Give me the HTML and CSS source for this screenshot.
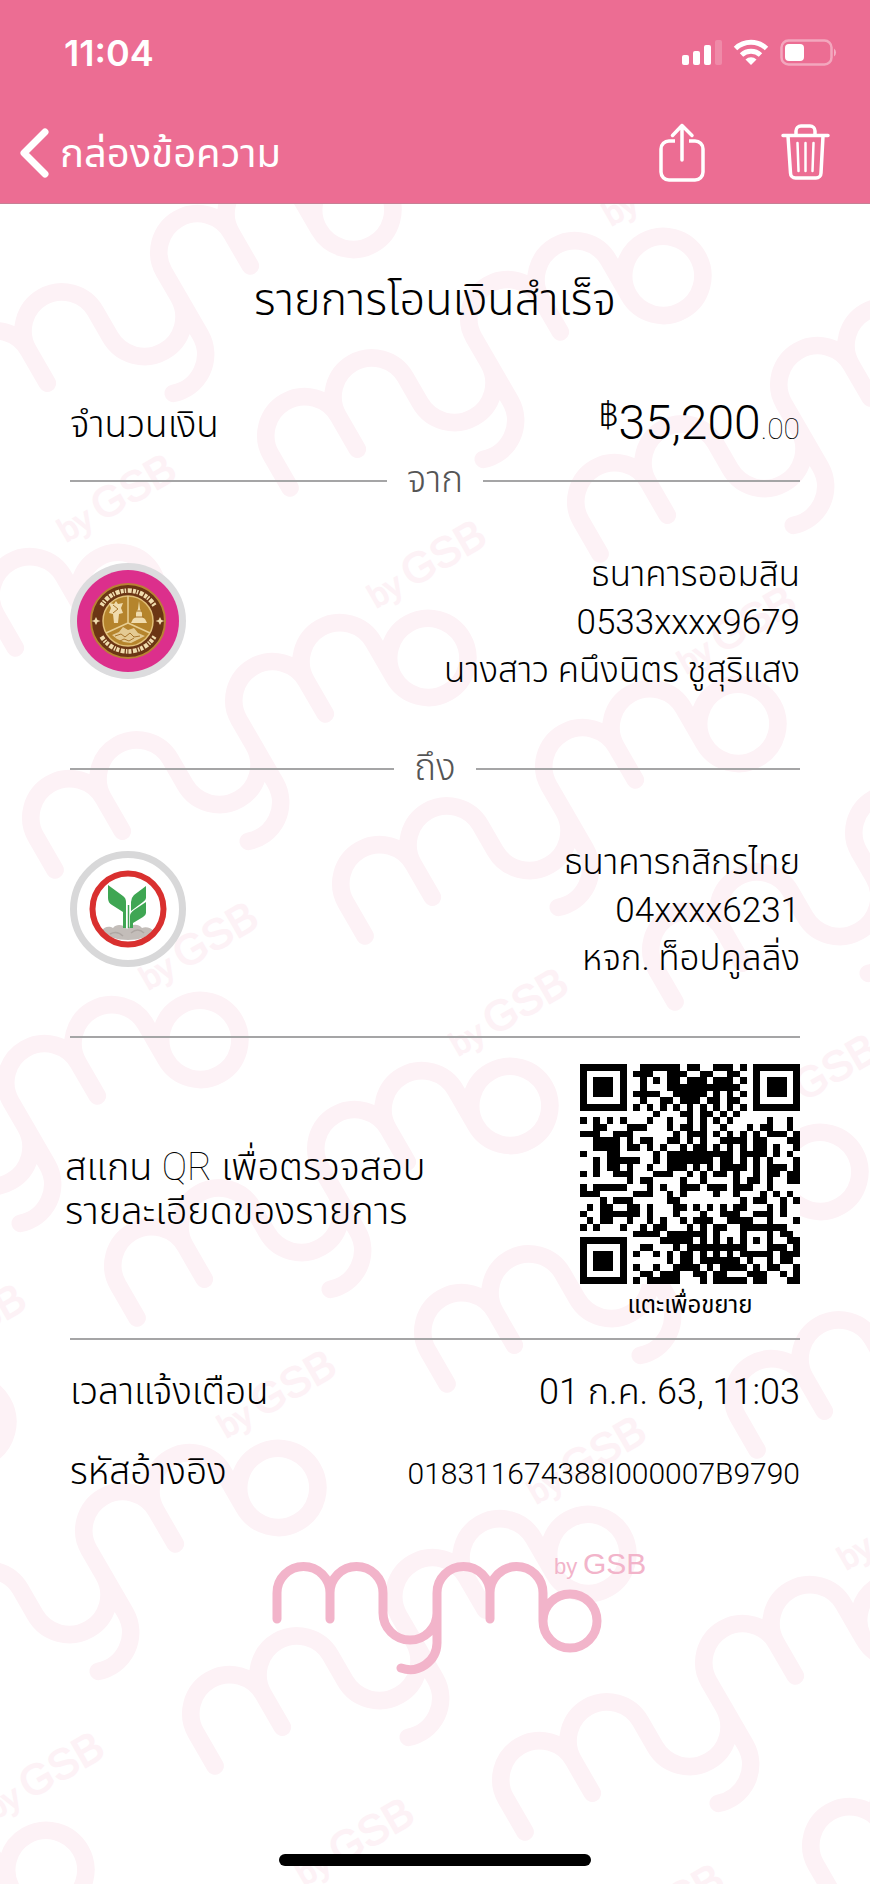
FILE: index.html
```html
<!DOCTYPE html>
<html lang="th">
<head>
<meta charset="utf-8">
<meta name="viewport" content="width=device-width, initial-scale=1">
<title>รายการโอนเงินสำเร็จ</title>
<link rel="stylesheet" href="styles.css">
</head>
<body>
<svg class="defs" width="0" height="0" aria-hidden="true">
  <defs>
    <path id="mymo" d="M0 53V27a26.5 26.5 0 0 1 53 0V53M53 27a26.5 26.5 0 0 1 53 0V47a27 27 0 0 0 54 0V27a26.5 26.5 0 0 1 53 0V53M213 27a26.5 26.5 0 0 1 53 0V55M160 47V77a27 27 0 0 1-36 25M320 55a27 27 0 1 1-54 0a27 27 0 1 1 54 0"/>
    <g id="mark">
      <g transform="rotate(-30) scale(1.465) translate(2 -55)">
        <use href="#mymo" class="mark-line"/>
        <text class="mark-text" x="279" y="8" font-size="22">by</text>
        <text class="mark-text" x="307" y="8" font-size="29">GSB</text>
      </g>
    </g>
  </defs>
</svg>

<header class="header">
  <div class="status">
    <span class="clock">11:04</span>
    <svg class="status-icons" viewBox="0 0 156 28" width="156" height="28" aria-hidden="true">
      <g fill="#fff">
        <rect x="0" y="16" width="7" height="10" rx="2"/>
        <rect x="11" y="12" width="7" height="14" rx="2"/>
        <rect x="22" y="6" width="7" height="20" rx="2"/>
        <rect x="33" y="1" width="7" height="25" rx="2" opacity=".2"/>
        <path d="M69 26l-5.500-5.500a8 8 0 0 1 11 0z"/>
        <rect x="103" y="5" width="19" height="17" rx="4"/>
        <path d="M152 9.500a5 5 0 0 1 0 8z" opacity=".45"/>
      </g>
      <g fill="none" stroke="#fff" stroke-width="5">
        <path d="M53.500 9.500a22.500 22.500 0 0 1 31 0"/>
        <path d="M59.500 16a14 14 0 0 1 19 0"/>
      </g>
      <rect x="99.500" y="1.500" width="50" height="24" rx="7" fill="none" stroke="#fff" stroke-width="2.500" opacity=".4"/>
    </svg>
  </div>
  <nav class="nav">
    <a class="back" href="#inbox">
      <svg viewBox="0 0 30 50" width="30" height="50" aria-hidden="true"><path d="M25 4L4 25L25 46" fill="none" stroke="#fff" stroke-width="7" stroke-linecap="round" stroke-linejoin="round"/></svg>
      <span>กล่องข้อความ</span>
    </a>
    <div class="actions">
      <button class="icon-button" type="button" aria-label="แชร์">
        <svg viewBox="0 0 48 60" width="48" height="60" fill="none" stroke="#fff" stroke-width="3.500"><path d="M17 18H11a8 8 0 0 0-8 8V49a8 8 0 0 0 8 8H37a8 8 0 0 0 8-8V26a8 8 0 0 0-8-8H31"/><path d="M24 37V2.500M14.500 12.500L24 2.500L34 12.500" stroke-linecap="round" stroke-linejoin="round"/></svg>
      </button>
      <button class="icon-button" type="button" aria-label="ลบ">
        <svg viewBox="0 0 50 60" width="50" height="60" fill="none" stroke="#fff" stroke-width="3.500" stroke-linecap="round" stroke-linejoin="round"><path d="M3 12.500H48M8 13L10.500 50a5 5 0 0 0 5 5H36a5 5 0 0 0 5-5L43 13M16 12V8a5 5 0 0 1 5-5H30a5 5 0 0 1 5 5V12"/><path d="M17.500 20L18.500 48M25.500 20V48M33.500 20L32.500 48" stroke-width="2.500"/></svg>
      </button>
    </div>
  </nav>
</header>

<main class="slip">
  <svg class="watermark" viewBox="0 204 870 1680" preserveAspectRatio="xMidYMin slice" aria-hidden="true">
    <use href="#mark" x="-100" y="-22"/><use href="#mark" x="210" y="44"/><use href="#mark" x="520" y="110"/><use href="#mark" x="830" y="176"/>
    <use href="#mark" x="-331" y="360"/><use href="#mark" x="-21" y="426"/><use href="#mark" x="289" y="492"/><use href="#mark" x="599" y="558"/><use href="#mark" x="909" y="624"/>
    <use href="#mark" x="-256" y="808"/><use href="#mark" x="54" y="874"/><use href="#mark" x="364" y="940"/><use href="#mark" x="674" y="1006"/>
    <use href="#mark" x="-174" y="1256"/><use href="#mark" x="136" y="1322"/><use href="#mark" x="446" y="1388"/><use href="#mark" x="756" y="1454"/>
    <use href="#mark" x="-406" y="1638"/><use href="#mark" x="-96" y="1704"/><use href="#mark" x="214" y="1770"/><use href="#mark" x="524" y="1836"/><use href="#mark" x="834" y="1902"/>
    <use href="#mark" x="-328" y="2086"/><use href="#mark" x="-18" y="2152"/><use href="#mark" x="292" y="2218"/>
  </svg>

  <h1 class="title">รายการโอนเงินสำเร็จ</h1>

  <div class="row amount">
    <span>จำนวนเงิน</span>
    <span class="value"><span class="baht">฿</span><span class="whole">35,200</span><span class="cents">.00</span></span>
  </div>

  <div class="divider"><span>จาก</span></div>

  <section class="party">
    <svg viewBox="0 0 116 116" width="116" height="116" role="img" aria-label="ธนาคารออมสิน">
      <circle cx="58" cy="58" r="58" fill="#dcdcde"/>
      <circle cx="58" cy="58" r="51" fill="#dc2f8c"/>
      <circle cx="58" cy="58" r="37" fill="#6b3514" stroke="#b98234" stroke-width="2"/>
      <circle cx="58" cy="58" r="25" fill="#b5842c" stroke="#e2c078" stroke-width="1.500"/>
      <g fill="none" stroke="#f0dcae" stroke-width="4.500">
        <path d="M31.500 42.500a31 31 0 0 1 53 0" stroke-dasharray="3 1 1.500 1.500 4 1.200"/>
        <path d="M31.500 73.500a31 31 0 0 0 53 0" stroke-dasharray="4 1.200 1.500 1 3 1.500"/>
      </g>
      <path d="M58 33V60L36 70M58 60L80 70" fill="none" stroke="#e8ce92" stroke-width="1.500"/>
      <g fill="#f0dcae">
        <path d="M69 38l1 8 2 4v4l3 2 2 4H61l2-4 3-2v-4l2-4z"/>
        <path d="M46 38l2 3 5-1-2 5 2 5-4 1-1 9h-4l-1-9-4-1 2-5-2-5 5 1z"/>
        <path d="M42 72l7-3 4-5 5 3 6-2 4 5 7 3-8 4-6 3-7-1-7-3z" opacity=".8"/>
        <path d="M26 54l1.500 3 3 1-3 1-1.500 3-1.500-3-3-1 3-1zM90 54l1.500 3 3 1-3 1-1.500 3-1.500-3-3-1 3-1z"/>
      </g>
      <path d="M45 73l6-2 4 3 5-4 4 4 6-1M50 78l4-2 5 2 5-3M43 42l5 4-5 4M67 48h5M65 54h9" fill="none" stroke="#a8742a" stroke-width="1"/>
    </svg>
    <div class="details">
      <p>ธนาคารออมสิน</p>
      <p class="number">0533xxxx9679</p>
      <p>นางสาว คนึงนิตร ชูสุริแสง</p>
    </div>
  </section>

  <div class="divider second"><span>ถึง</span></div>

  <section class="party">
    <svg viewBox="0 0 116 116" width="116" height="116" role="img" aria-label="ธนาคารกสิกรไทย">
      <circle cx="58" cy="58" r="54.500" fill="#fff" stroke="#d8d8d9" stroke-width="7"/>
      <path d="M32 80c2-5 8-5 11-3 4-5 11-3 14 1 4-5 11-6 15-1 4-2 9 0 12 3-6 6-15 9-26 9s-20-3-26-9z" fill="#c3bdb9"/>
      <path d="M40 83q7-4 13 2M61 82q7-6 13 0" fill="none" stroke="#aea7a3" stroke-width="1.500"/>
      <circle cx="58" cy="58" r="35.500" fill="none" stroke="#d9302f" stroke-width="6"/>
      <path d="M38 34L53 45q3 2 3 6V77H53V61L42 54q-4-2-4-7z" fill="#3fa653"/>
      <path d="M76 35V47q0 2-3 4L61 60V51q0-4 3-7zM76 51V62q0 2-3 4L63 72V77H60V65q0-3 4-6z" fill="#3fa653"/>
      <path d="M58.500 54V77" stroke="#3fa653" stroke-width="1.500"/>
    </svg>
    <div class="details">
      <p>ธนาคารกสิกรไทย</p>
      <p class="number">04xxxx6231</p>
      <p>หจก. ท็อปคูลลิ่ง</p>
    </div>
  </section>

  <section class="scan">
    <p class="scan-text">สแกน <span class="thin">QR</span> เพื่อตรวจสอบ<br>รายละเอียดของรายการ</p>
    <button class="qr-button" type="button">
      <svg class="qr" viewBox="0 0 33 33" aria-hidden="true"><rect width="33" height="33" fill="#fff"/><path id="qr-modules" fill="#000" shape-rendering="crispEdges"/></svg>
      <span>แตะเพื่อขยาย</span>
    </button>
  </section>

  <div class="meta">
    <div class="row"><span>เวลาแจ้งเตือน</span><span class="date">01 ก.ค. 63, 11:03</span></div>
    <div class="row"><span>รหัสอ้างอิง</span><span class="reference">018311674388I000007B9790</span></div>
  </div>

  <svg class="logo" viewBox="-5 -24 390 133" width="390" height="133" role="img" aria-label="mymo by GSB">
    <use href="#mymo" class="logo-line"/>
    <text class="logo-text" x="277" y="8" font-size="22">by</text>
    <text class="logo-text" x="306" y="8" font-size="30">GSB</text>
  </svg>

  <div class="home-bar"></div>
</main>
<script src="qr.js"></script>
</body>
</html>
```

FILE: styles.css
```css
* {
  box-sizing: border-box;
}

body {
  margin: 0;
  min-height: 100vh;
  display: flex;
  flex-direction: column;
  background: #fff;
  color: #000;
  font-family: Roboto, "Liberation Sans", "Noto Sans Thai", "Loma", sans-serif;
  font-size: 37px;
  font-weight: 350;
}

h1,
p {
  margin: 0;
  font-weight: inherit;
}

.defs {
  position: absolute;
}

.header {
  background: #ec6d93;
  border-bottom: 1px solid #c77f95;
  color: #fff;
  height: 204px;
}

.status {
  display: flex;
  justify-content: space-between;
  align-items: center;
  height: 106px;
  padding: 0 32px 0 64px;
}

.clock {
  font-family: Inter, "Liberation Sans", sans-serif;
  font-size: 36px;
  font-weight: 600;
}

.nav {
  display: flex;
  justify-content: space-between;
  align-items: center;
  height: 94px;
  padding: 0 40px 0 20px;
}

.back {
  display: flex;
  align-items: center;
  gap: 10px;
  color: #fff;
  font-size: 40px;
  font-weight: 400;
  text-decoration: none;
}

.back span {
  padding-top: 4px;
}

.actions {
  display: flex;
  gap: 74px;
}

.icon-button,
.qr-button {
  padding: 0;
  border: 0;
  background: none;
  color: inherit;
  font: inherit;
  cursor: pointer;
}

.icon-button svg {
  display: block;
}

.slip {
  position: relative;
  flex: 1;
  display: flex;
  flex-direction: column;
  padding: 66px 70px 18px;
  overflow: hidden;
}

.slip > * {
  position: relative;
}

.slip > .watermark {
  position: absolute;
  top: 0;
  left: 0;
  width: 100%;
  height: 100%;
}

.mark-text,
.logo-text {
  font-family: "Liberation Sans", sans-serif;
  font-weight: 400;
}

.mark-line,
.logo-line {
  fill: none;
  stroke-linecap: round;
}

.mark-line {
  stroke: #fdf2f6;
  stroke-width: 12px;
}

.mark-text {
  fill: #fdf2f6;
  stroke: #fdf2f6;
  stroke-width: 1px;
}

.logo-line {
  stroke: #f2b4ca;
  stroke-width: 9px;
}

.logo-text {
  fill: #f2b4ca;
}

.title {
  font-size: 45px;
  line-height: 60px;
  text-align: center;
}

.row {
  display: flex;
  justify-content: space-between;
  align-items: center;
}

.amount {
  height: 60px;
  margin-top: 66px;
}

.value {
  font-weight: 300;
  line-height: 60px;
}

.baht {
  font-size: 35px;
  line-height: 1;
  vertical-align: 12px;
}

.whole {
  font-size: 48px;
}

.cents {
  font-size: 30px;
  font-weight: 100;
}

.number,
.date,
.reference {
  font-weight: 300;
}

.thin {
  font-weight: 100;
}

.divider {
  display: flex;
  align-items: center;
  gap: 20px;
  height: 48px;
  margin: 1px 0 44px;
  color: #555;
  font-weight: 300;
}

.divider.second {
  margin-top: 52px;
}

.divider::before,
.divider::after {
  content: "";
  flex: 1;
  height: 2px;
  background: #a5a5a6;
}

.party {
  display: flex;
  justify-content: space-between;
  align-items: center;
  height: 144px;
}

.details {
  padding-top: 4px;
  font-size: 35px;
  line-height: 48px;
  text-align: right;
}

.scan {
  display: flex;
  justify-content: space-between;
  align-items: center;
  margin-top: 55px;
  padding: 26px 0 19px;
  border-top: 2px solid #a5a5a6;
  border-bottom: 2px solid #a5a5a6;
}

.scan-text {
  margin-left: -5px;
  padding-bottom: 6px;
  font-size: 38px;
  line-height: 44px;
}

.qr-button {
  display: flex;
  flex-direction: column;
  align-items: center;
  gap: 7px;
  font-size: 24px;
  font-weight: 400;
  line-height: 28px;
}

.qr {
  width: 220px;
  height: 220px;
}

.meta {
  margin-top: 13px;
}

.meta .row {
  height: 80px;
}

.date {
  font-size: 36px;
}

.reference {
  font-size: 30px;
}

.logo {
  display: block;
  margin: 29px 0 0 202px;
}

.home-bar {
  align-self: center;
  width: 312px;
  height: 12px;
  margin-top: auto;
  border-radius: 6px;
  background: #000;
}
```

FILE: qr.js
```js
const rows = [
  "#######..######.##..###.#.#######",
  "#.....#.###..###..##..##..#.....#",
  "#.###.#..#.#.##.###.###.#.#.###.#",
  "#.###.#..#...###########..#.###.#",
  "#.###.#.####..#####.#.#.#.#.###.#",
  "#.....#..#..##.###.##.##..#.....#",
  "#######.#.#.#.#.#.#.#.#.#.#######",
  "...........#...##.##.#.#.........",
  "#.#.#.#...#..#..#.#.#.#.....#..#.",
  "..##...###...#.##.#..#...#.##..#.",
  "###..###......#.###.#.#.#.#.###.#",
  "..####.#.##..##.#.#..####.##...##",
  "..####.##.#.#..#.##.#.#.#.##.#..#",
  "#...##.....#.##########.####.#.#.",
  "..#.#####..#.#######.##.#.#.#...#",
  "..#.##.#..#..###.#.#.####.#.###.#",
  "#.#..###...###..#.#.##.#..#.##.##",
  ".......#.##....#..#....#.##.#..##",
  "#.#####...#.#..###.###.###..#....",
  "###.....###..#.#....#..#...#.#.#.",
  "...#.###.....##.........#.##..#.#",
  ".#.##..##.#...##.#.#.#.##...#.#..",
  "#..######.#...#...#..###..###.#..",
  ".#.##..#..#.#..#.###..####..#...#",
  "#.#...#..#.##...#.#.##..#######..",
  "........####.######.#...#...#.##.",
  "#######.....#####.#.#.#.#.#.#..##",
  "#.....#..##...#.#########...###.#",
  "#.###.#.#..#.#.##.#.#.#.#####.###",
  "#.###.#......#.##.######.#..#.##.",
  "#.###.#.#..#..####.#.####.#.##..#",
  "#.....#..##.###..##.##...###..#.#",
  "#######.#.#####...#.#####.##...##"
];

const path = rows
  .map((row, y) => [...row].map((cell, x) => (cell === "#" ? `M${x} ${y}h1v1h-1z` : "")).join(""))
  .join("");

document.getElementById("qr-modules").setAttribute("d", path);
```
